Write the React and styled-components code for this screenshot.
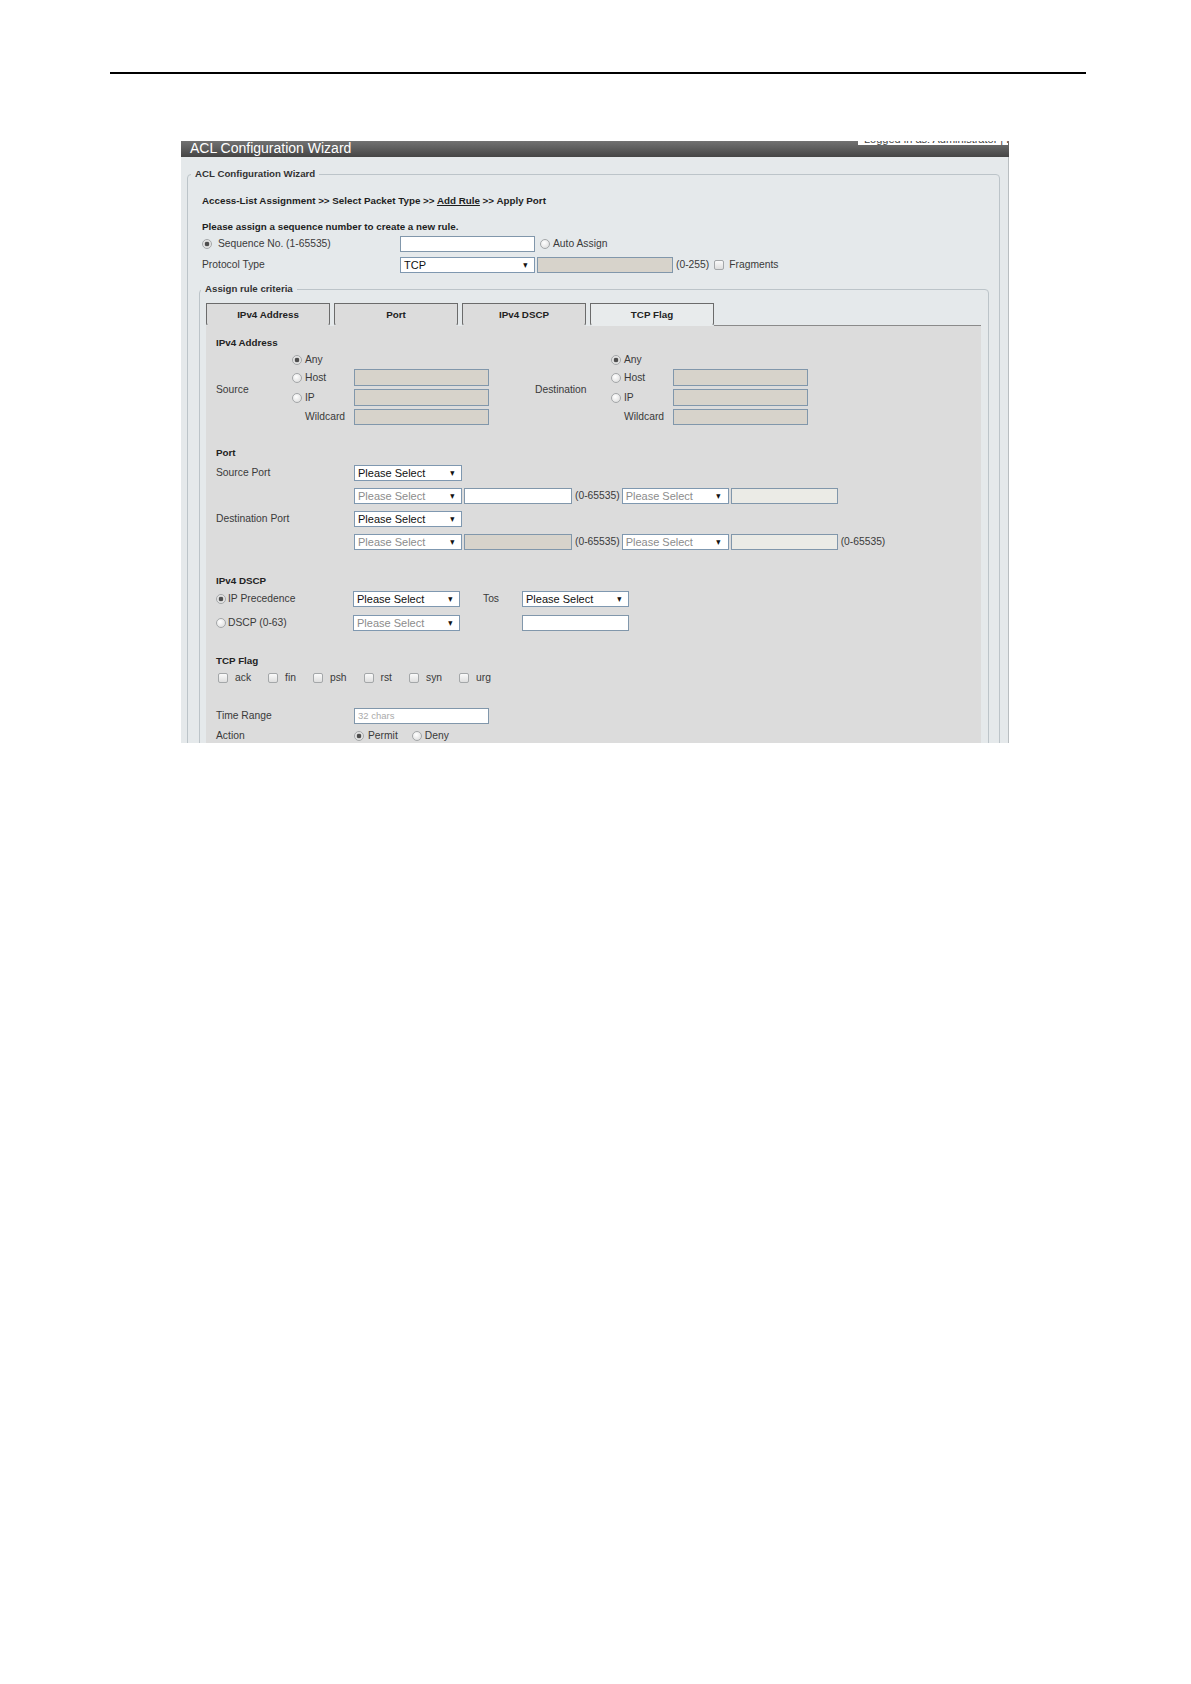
import React from "react";
import styled, { createGlobalStyle } from "styled-components";

const GlobalStyle = createGlobalStyle`
  body {
    margin: 0;
    background: #fff;
    font-family: "Liberation Sans", Arial, sans-serif;
  }
`;

const Page = styled.div`
  width: 1191px;
  min-height: 1684px;
  padding-top: 72px;
  box-sizing: border-box;
`;

const Rule = styled.div`
  margin-left: 110px;
  width: 976px;
  height: 2px;
  background: #000;
`;

const Screen = styled.div`
  position: relative;
  margin: 67px 0 0 181px;
  width: 828px;
  height: 602px;
  overflow: hidden;
  background: #e5e9eb;
  color: #3a3a3a;
  font-size: 10.3px;
`;

const TitleBar = styled.div`
  height: 16px;
  padding: 0 9px;
  background: linear-gradient(#727272, #454545);
  color: #fff;
  font-size: 14px;
  line-height: 14px;
  white-space: nowrap;
`;

const UserStrip = styled.div`
  position: absolute;
  top: 0;
  right: 1px;
  width: 150px;
  height: 4px;
  overflow: hidden;
  background: #fff;
  color: #444;
  font-size: 11px;
  line-height: 11px;
  white-space: nowrap;
  span {
    display: block;
    margin: -7px 0 0 6px;
  }
`;

const Body = styled.div`
  height: 586px;
  padding: 11px 0 0 6px;
  border-right: 1px solid #b9bec1;
  box-sizing: border-box;
`;

const Fieldset = styled.fieldset`
  margin: 0;
  padding: 0;
  width: ${(p) => p.$width}px;
  min-height: ${(p) => p.$minHeight}px;
  border: 1px solid #bcc4c9;
  border-radius: 4px;
  box-sizing: border-box;
  min-width: 0;
`;

const Legend = styled.legend`
  margin-left: ${(p) => p.$offset}px;
  padding: 0 4px;
  font-weight: bold;
  font-size: 9.7px;
  line-height: 12px;
  color: #333;
`;

const OuterContent = styled.div`
  padding: 15px 0 0 11px;
`;

const Crumb = styled.div`
  margin-top: ${(p) => p.$mt || 0}px;
  padding-left: 3px;
  font-weight: bold;
  font-size: 9.8px;
  line-height: 12px;
  color: #1e1e1e;
  u {
    text-decoration: underline;
  }
`;

const FormRow = styled.div`
  display: grid;
  grid-template-columns: 198px auto;
  align-items: center;
  height: 16px;
  margin-top: ${(p) => p.$mt}px;
  padding-left: 3px;
`;

const Inline = styled.div`
  display: flex;
  align-items: center;
  gap: ${(p) => p.$gap ?? 2}px;
  white-space: nowrap;
`;

const Label = styled.span`
  font-size: 10.3px;
  line-height: 12px;
  color: #3a3a3a;
  white-space: nowrap;
  padding-left: ${(p) => p.$indent || 0}px;
  margin-left: ${(p) => p.$ml || 0}px;
`;

const RadioItem = styled.label`
  display: flex;
  align-items: center;
  gap: ${(p) => p.$gap}px;
  margin-left: ${(p) => p.$ml || 0}px;
  white-space: nowrap;
`;

const Radio = styled.span`
  flex: none;
  width: 10px;
  height: 10px;
  border-radius: 50%;
  border: 1px solid #a4a7a9;
  box-sizing: border-box;
  background: ${(p) =>
    p.$checked
      ? "radial-gradient(circle, #4d4d4d 0 2px, #d9d9d9 2.6px, #f4f4f4 5px)"
      : "radial-gradient(circle at 40% 35%, #fff, #d8d8d8)"};
`;

const Check = styled.span`
  flex: none;
  width: 10px;
  height: 10px;
  margin-left: ${(p) => p.$ml || 0}px;
  border: 1px solid #a4a7a9;
  border-radius: 2px;
  box-sizing: border-box;
  background: linear-gradient(#fafafa, #dedede);
`;

const tones = {
  white: "#ffffff",
  beige: "#d7d3cb",
  pale: "#ebebe6",
};

const Input = styled.div`
  flex: none;
  width: ${(p) => p.$w}px;
  height: ${(p) => p.$h || 16}px;
  border: 1px solid #8197ab;
  box-sizing: border-box;
  background: ${(p) => tones[p.$tone || "white"]};
  padding-left: 3px;
  font-size: 9.5px;
  line-height: 14px;
  color: #aaa;
`;

const Select = styled.div`
  flex: none;
  display: flex;
  align-items: center;
  justify-content: space-between;
  width: ${(p) => p.$w}px;
  height: 16px;
  padding: 0 5px 0 3px;
  border: 1px solid #7f98b0;
  box-sizing: border-box;
  background: #fff;
  font-size: 11px;
  color: ${(p) => (p.$disabled ? "#8c8c8c" : "#111")};
  b {
    font-size: 8.5px;
    color: #111;
    font-weight: normal;
    transform: scaleX(0.85);
  }
`;

const Inner = styled.div`
  padding: 8px 7px 0 6px;
`;

const TabBar = styled.div`
  display: flex;
  gap: 4px;
  height: 23px;
`;

const Tab = styled.div`
  width: 124px;
  height: 23px;
  box-sizing: border-box;
  border: 1px solid #6b6b6b;
  border-bottom: 1px solid transparent;
  border-bottom-left-radius: 3px;
  border-bottom-right-radius: 3px;
  background: ${(p) => (p.$light ? "#e8ebec" : "#dcdcdc")};
  font-weight: bold;
  font-size: 9.8px;
  line-height: 21px;
  text-align: center;
  color: #222;
`;

const TabRow = styled.div`
  display: flex;
  align-items: flex-end;
  height: 23px;
`;

const TabLine = styled.div`
  flex: 1;
  height: 1px;
  background: #8a8a8a;
`;

const Panel = styled.div`
  min-height: 500px;
  padding: 11px 10px 0 10px;
  background: #dcdcdc;
`;

const Heading = styled.div`
  margin-top: ${(p) => p.$mt || 0}px;
  font-weight: bold;
  font-size: 9.8px;
  line-height: 12px;
  color: #222;
`;

const AddressRow = styled.div`
  display: flex;
  gap: 46px;
  margin-top: 5px;
`;

const AddressBlock = styled.div`
  display: grid;
  grid-template-columns: ${(p) => p.$label}px ${(p) => p.$radio}px 135px;
  grid-template-rows: 12px 17px 17px 16px;
  row-gap: 3px;
  align-items: center;
`;

const BlockLabel = styled(Label)`
  grid-row: 1 / -1;
  align-self: center;
`;

const Grid = styled.div`
  display: grid;
  grid-template-columns: ${(p) => p.$cols};
  grid-auto-rows: ${(p) => p.$row || 16}px;
  row-gap: ${(p) => p.$gap || 0}px;
  align-items: center;
  margin-top: ${(p) => p.$mt}px;
`;

const Flags = styled.div`
  display: flex;
  align-items: center;
  gap: 17px;
  height: 12px;
  margin-top: 5px;
  padding-left: 2px;
`;

const FlagItem = styled.label`
  display: flex;
  align-items: center;
  gap: 7px;
`;

const Spacer = styled.div`
  height: ${(p) => p.$h}px;
`;

function Choice({ checked, gap = 3, ml, children }) {
  return (
    <RadioItem $gap={gap} $ml={ml}>
      <Radio $checked={checked} />
      <Label>{children}</Label>
    </RadioItem>
  );
}

function Dropdown({ w = 108, disabled, children = "Please Select" }) {
  return (
    <Select $w={w} $disabled={disabled}>
      <span>{children}</span>
      <b>▼</b>
    </Select>
  );
}

function AddressGroup({ title, label, radio }) {
  return (
    <AddressBlock $label={label} $radio={radio}>
      <BlockLabel>{title}</BlockLabel>
      <Choice checked>Any</Choice>
      <span />
      <Choice>Host</Choice>
      <Input $w={135} $h={17} $tone="beige" />
      <Choice>IP</Choice>
      <Input $w={135} $h={17} $tone="beige" />
      <Label $indent={13}>Wildcard</Label>
      <Input $w={135} $tone="beige" />
    </AddressBlock>
  );
}

const flags = ["ack", "fin", "psh", "rst", "syn", "urg"];
const tabs = ["IPv4 Address", "Port", "IPv4 DSCP", "TCP Flag"];

export default function App() {
  return (
    <Page>
      <GlobalStyle />
      <Rule />
      <Screen>
        <TitleBar>ACL Configuration Wizard</TitleBar>
        <UserStrip>
          <span>Logged in as: Administrator | Logout</span>
        </UserStrip>
        <Body>
          <Fieldset $width={813} $minHeight={700}>
            <Legend $offset={3}>ACL Configuration Wizard</Legend>
            <OuterContent>
              <Crumb>
                Access-List Assignment &gt;&gt; Select Packet Type &gt;&gt;{" "}
                <u>Add Rule</u> &gt;&gt; Apply Port
              </Crumb>
              <Crumb $mt={14}>
                Please assign a sequence number to create a new rule.
              </Crumb>
              <FormRow $mt={3}>
                <Choice checked gap={6}>
                  Sequence No. (1-65535)
                </Choice>
                <Inline $gap={5}>
                  <Input $w={135} />
                  <Choice>Auto Assign</Choice>
                </Inline>
              </FormRow>
              <FormRow $mt={5}>
                <Label>Protocol Type</Label>
                <Inline $gap={2}>
                  <Dropdown w={135}>TCP</Dropdown>
                  <Input $w={136} $tone="beige" />
                  <Label $ml={1}>(0-255)</Label>
                  <Inline $gap={5}>
                    <Check $ml={3} />
                    <Label>Fragments</Label>
                  </Inline>
                </Inline>
              </FormRow>
              <Spacer $h={10} />
              <Fieldset $width={790} $minHeight={600}>
                <Legend $offset={1}>Assign rule criteria</Legend>
                <Inner>
                  <TabRow>
                    <TabBar>
                      {tabs.map((t, i) => (
                        <Tab key={t} $light={i === 3}>
                          {t}
                        </Tab>
                      ))}
                    </TabBar>
                    <TabLine />
                  </TabRow>
                  <Panel>
                    <Heading>IPv4 Address</Heading>
                    <AddressRow>
                      <AddressGroup title="Source" label={76} radio={62} />
                      <AddressGroup title="Destination" label={76} radio={62} />
                    </AddressRow>

                    <Heading $mt={22}>Port</Heading>
                    <Grid $cols="138px auto" $gap={7} $mt={6}>
                      <Label>Source Port</Label>
                      <Inline>
                        <Dropdown />
                      </Inline>
                      <span />
                      <Inline>
                        <Dropdown disabled />
                        <Input $w={108} />
                        <Label $ml={1}>(0-65535)</Label>
                        <Dropdown w={107} disabled />
                        <Input $w={107} $tone="pale" />
                      </Inline>
                      <Label>Destination Port</Label>
                      <Inline>
                        <Dropdown />
                      </Inline>
                      <span />
                      <Inline>
                        <Dropdown disabled />
                        <Input $w={108} $tone="beige" />
                        <Label $ml={1}>(0-65535)</Label>
                        <Dropdown w={107} disabled />
                        <Input $w={107} $tone="pale" />
                        <Label $ml={1}>(0-65535)</Label>
                      </Inline>
                    </Grid>

                    <Heading $mt={25}>IPv4 DSCP</Heading>
                    <Grid $cols="137px 107px 62px 107px" $gap={8} $mt={4}>
                      <Choice checked gap={2}>
                        IP Precedence
                      </Choice>
                      <Dropdown w={107} />
                      <Label $indent={23}>Tos</Label>
                      <Dropdown w={107} />
                      <Choice gap={2}>DSCP (0-63)</Choice>
                      <Dropdown w={107} disabled />
                      <span />
                      <Input $w={107} />
                    </Grid>

                    <Heading $mt={24}>TCP Flag</Heading>
                    <Flags>
                      {flags.map((f) => (
                        <FlagItem key={f}>
                          <Check />
                          <Label>{f}</Label>
                        </FlagItem>
                      ))}
                    </Flags>

                    <Grid $cols="138px auto" $mt={24} $gap={4}>
                      <Label>Time Range</Label>
                      <Inline>
                        <Input $w={135}>32 chars</Input>
                      </Inline>
                      <Label>Action</Label>
                      <Inline $gap={0}>
                        <Choice checked gap={4}>
                          Permit
                        </Choice>
                        <Choice ml={14}>Deny</Choice>
                      </Inline>
                    </Grid>
                  </Panel>
                </Inner>
              </Fieldset>
            </OuterContent>
          </Fieldset>
        </Body>
      </Screen>
    </Page>
  );
}
